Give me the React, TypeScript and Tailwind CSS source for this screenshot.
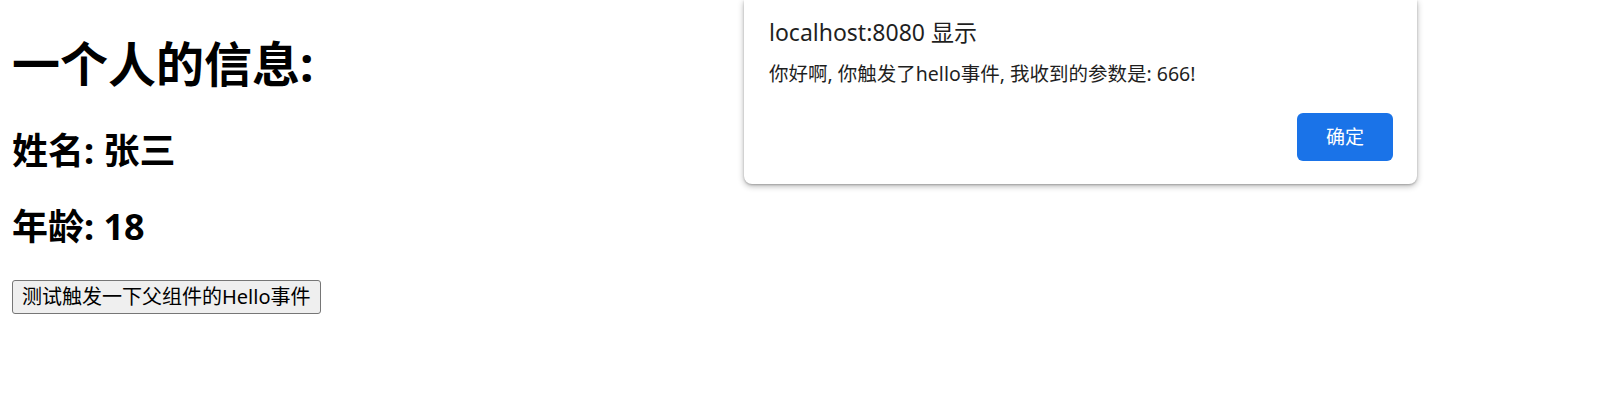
import React from 'react';

const font = "[font-family:'Noto_Sans','Noto_Sans_CJK_SC',sans-serif]";

const AlertDialog = () => (
    <div className={`absolute left-[744px] top-0 w-[673px] h-[184px] bg-white rounded-b-[8px] shadow-[0_2px_6px_rgba(0,0,0,0.3),0_1px_2px_rgba(0,0,0,0.2)] pt-[16px] pl-[25px] pr-[24px] ${font}`}>
        <div className="text-[23px] leading-[32px] text-[#1f1f1f]">localhost:8080 显示</div>
        <div className="mt-[13px] text-[19.5px] leading-[26px] text-[#1f1f1f]">
            你好啊, 你触发了hello事件, 我收到的参数是: 666!
        </div>
        <div className="flex justify-end mt-[26px]">
            <button className="w-[96px] h-[48px] rounded-[6px] bg-[#1a73e8] text-white text-[19px]">
                确定
            </button>
        </div>
    </div>
);

export default function App() {
    const sayHello = () => {};

    return (
        <div className={`relative w-[1607px] h-[405px] bg-white overflow-hidden pl-[12px] text-black ${font}`}>
            <h1 className="pt-[32px] text-[48px] leading-[64px] font-bold">一个人的信息:</h1>
            <h2 className="mt-[31px] text-[36px] leading-[48px] font-bold">姓名: 张三</h2>
            <h2 className="mt-[28px] text-[36px] leading-[48px] font-bold">年龄: 18</h2>
            <button
                onClick={sayHello}
                className="mt-[29px] h-[34px] px-[9px] text-[20px] leading-[24px] bg-[#efefef] border border-[#767676] rounded-[3px]"
            >
                测试触发一下父组件的Hello事件
            </button>
            <AlertDialog />
        </div>
    );
}
